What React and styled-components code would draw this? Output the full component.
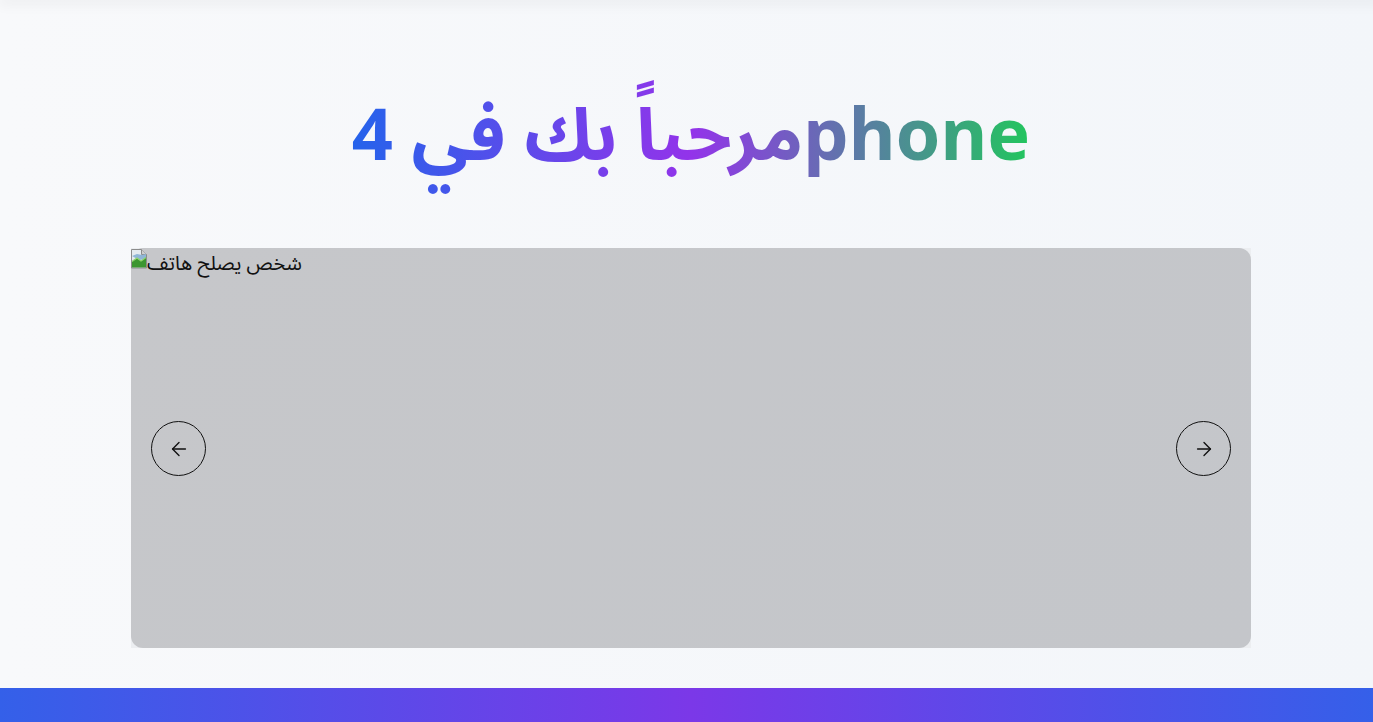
import React from 'react';
import styled, { createGlobalStyle } from 'styled-components';
import { ArrowLeft, ArrowRight } from 'lucide-react';

const GlobalStyle = createGlobalStyle`
  html, body {
    margin: 0;
    padding: 0;
    overflow-x: hidden;
  }
  body {
    font-family: "Noto Sans", "Noto Sans Arabic", "DejaVu Sans", sans-serif;
    background: #f6f8fa;
  }
`;

const Page = styled.div`
  width: 1382px;
  min-height: 722px;
  display: flex;
  flex-direction: column;
  background: linear-gradient(to right, #f8f9fb, #f3f6fa);
`;

const TopBar = styled.div`
  height: 0;
  box-shadow: 0 0 14px 2px rgba(0, 0, 0, 0.12);
`;

const Hero = styled.section`
  display: flex;
  flex-direction: column;
  align-items: center;
  padding: 96px 0 40px;
`;

const Title = styled.h1`
  margin: 0 0 80px;
  font-size: 72px;
  line-height: 72px;
  font-weight: 700;
  text-align: center;
`;

const GradientText = styled.span`
  display: inline-block;
  padding: 20px 0 30px;
  margin: -20px 0 -30px;
  background: linear-gradient(to right, #2563eb, #9333ea, #22c55e);
  -webkit-background-clip: text;
  background-clip: text;
  color: transparent;
`;

const Carousel = styled.div`
  position: relative;
  width: 1120px;
  height: 400px;
  background: #eceef1;
`;

const Slide = styled.div`
  height: 100%;
  border-radius: 12px;
  background: linear-gradient(135deg, #c6c7ca, #c4c6ca);
`;

const BrokenImage = styled.div`
  display: flex;
  align-items: flex-start;
  color: #111;

  svg {
    flex-shrink: 0;
  }
`;

const AltText = styled.span`
  font-size: 20px;
  line-height: 32px;
  margin-top: -1px;
`;

const NavButton = styled.button`
  position: absolute;
  top: 50%;
  ${(p) => (p.side === 'left' ? 'left: 20px;' : 'right: 20px;')}
  width: 55px;
  height: 55px;
  margin-top: -27px;
  border-radius: 50%;
  border: 1px solid #111;
  background: transparent;
  display: flex;
  align-items: center;
  justify-content: center;
  padding: 0;
  color: #111;
  cursor: pointer;
`;

const Footer = styled.footer`
  height: 40px;
  margin-top: auto;
  background: linear-gradient(to right, #3460e9, #7b38e8, #3460e9);
`;

const BrokenIcon = () => (
  <svg width="16" height="22" viewBox="0 0 16 22">
    <path d="M0.5 1.5h10l5 5v13.5H0.5z" fill="#e4eaef" stroke="#8c8c8c" strokeWidth="1" />
    <path d="M10.5 1.5v5h5" fill="#cfcfcf" stroke="#8c8c8c" strokeWidth="1" />
    <path d="M1 8l5-2 5 1 4-1v5l-7 1z" fill="#8fb6d6" />
    <path d="M1 19.5v-6l5-3.5 4 3 5-3.5v10z" fill="#3c9630" />
    <path d="M1 13.5l5-3.5 4 3 5-3.5" fill="none" stroke="#8fd46c" strokeWidth="1.3" />
  </svg>
);

export default function App() {
  return (
    <>
      <GlobalStyle />
      <Page>
        <TopBar />
        <Hero>
          <Title>
            <GradientText>مرحباً بك في 4phone</GradientText>
          </Title>
          <Carousel>
            <Slide>
              <BrokenImage>
                <BrokenIcon />
                <AltText>شخص يصلح هاتف</AltText>
              </BrokenImage>
            </Slide>
            <NavButton side="left" aria-label="previous">
              <ArrowLeft size={22} strokeWidth={1.5} />
            </NavButton>
            <NavButton side="right" aria-label="next">
              <ArrowRight size={22} strokeWidth={1.5} />
            </NavButton>
          </Carousel>
        </Hero>
        <Footer />
      </Page>
    </>
  );
}
